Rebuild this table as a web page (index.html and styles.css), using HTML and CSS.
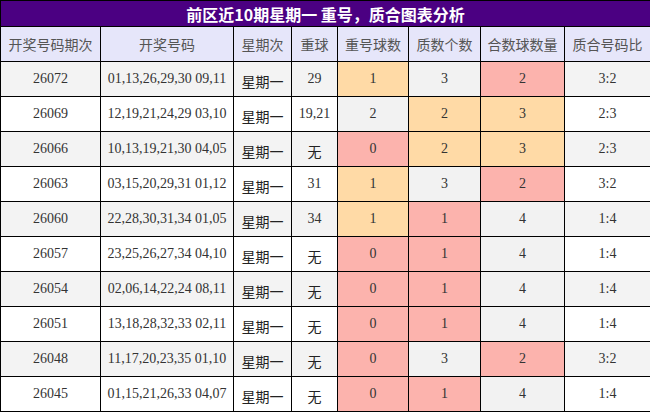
FILE: index.html
```html
<!DOCTYPE html>
<html lang="zh">
<head>
<meta charset="utf-8">
<title>前区近10期星期一 重号，质合图表分析</title>
<link rel="stylesheet" href="styles.css">
</head>
<body>
<table class="chart">
  <colgroup>
    <col class="c1"><col class="c2"><col class="c3"><col class="c4">
    <col class="c5"><col class="c6"><col class="c7"><col class="c8">
  </colgroup>
  <thead>
    <tr class="title-row"><th colspan="8">前区近10期星期一 重号，质合图表分析</th></tr>
    <tr class="head-row">
      <th>开奖号码期次</th><th>开奖号码</th><th>星期次</th><th>重球</th>
      <th>重号球数</th><th>质数个数</th><th>合数球数量</th><th>质合号码比</th>
    </tr>
  </thead>
  <tbody>
    <tr class="odd"><td>26072</td><td>01,13,26,29,30 09,11</td><td class="cn">星期一</td><td>29</td><td class="or">1</td><td class="gy">3</td><td class="pk">2</td><td>3:2</td></tr>
    <tr><td>26069</td><td>12,19,21,24,29 03,10</td><td class="cn">星期一</td><td>19,21</td><td class="gy">2</td><td class="or">2</td><td class="or">3</td><td>2:3</td></tr>
    <tr class="odd"><td>26066</td><td>10,13,19,21,30 04,05</td><td class="cn">星期一</td><td class="cn">无</td><td class="pk">0</td><td class="or">2</td><td class="or">3</td><td>2:3</td></tr>
    <tr><td>26063</td><td>03,15,20,29,31 01,12</td><td class="cn">星期一</td><td>31</td><td class="or">1</td><td class="gy">3</td><td class="pk">2</td><td>3:2</td></tr>
    <tr class="odd"><td>26060</td><td>22,28,30,31,34 01,05</td><td class="cn">星期一</td><td>34</td><td class="or">1</td><td class="pk">1</td><td class="gy">4</td><td>1:4</td></tr>
    <tr><td>26057</td><td>23,25,26,27,34 04,10</td><td class="cn">星期一</td><td class="cn">无</td><td class="pk">0</td><td class="pk">1</td><td class="gy">4</td><td>1:4</td></tr>
    <tr class="odd"><td>26054</td><td>02,06,14,22,24 08,11</td><td class="cn">星期一</td><td class="cn">无</td><td class="pk">0</td><td class="pk">1</td><td class="gy">4</td><td>1:4</td></tr>
    <tr><td>26051</td><td>13,18,28,32,33 02,11</td><td class="cn">星期一</td><td class="cn">无</td><td class="pk">0</td><td class="pk">1</td><td class="gy">4</td><td>1:4</td></tr>
    <tr class="odd"><td>26048</td><td>11,17,20,23,35 01,10</td><td class="cn">星期一</td><td class="cn">无</td><td class="pk">0</td><td class="gy">3</td><td class="pk">2</td><td>3:2</td></tr>
    <tr><td>26045</td><td>01,15,21,26,33 04,07</td><td class="cn">星期一</td><td class="cn">无</td><td class="pk">0</td><td class="pk">1</td><td class="gy">4</td><td>1:4</td></tr>
  </tbody>
</table>
</body>
</html>
```

FILE: styles.css
```css
html, body {
  margin: 0;
  padding: 0;
  background: #ffffff;
}

.chart {
  width: 650px;
  table-layout: fixed;
  border-collapse: collapse;
  font-family: "Liberation Serif", "Noto Sans CJK SC", serif;
  font-size: 14px;
  color: #333333;
}

.c1 { width: 100px; }
.c2 { width: 133px; }
.c3 { width: 58px; }
.c4 { width: 46px; }
.c5 { width: 71px; }
.c6 { width: 72px; }
.c7 { width: 84px; }
.c8 { width: 86px; }

.chart th,
.chart td {
  border: 1px solid #000000;
  text-align: center;
  vertical-align: middle;
  padding: 0;
  white-space: nowrap;
  overflow: hidden;
}

.title-row th {
  height: 25px;
  background: #4b0082;
  color: #ffffff;
  font-family: "Noto Sans CJK SC", "Liberation Serif", sans-serif;
  font-size: 16px;
  font-weight: bold;
  line-height: 22px;
}

.head-row th {
  height: 34px;
  background: #e6e6fa;
  color: #555555;
  font-family: "Noto Sans CJK SC", sans-serif;
  font-size: 14px;
  font-weight: normal;
  line-height: 20px;
}

.chart td {
  height: 34px;
  line-height: 20px;
}

.chart tr.odd td {
  background: #f3f3f3;
}

.chart td.cn {
  font-family: "Noto Sans CJK SC", sans-serif;
  color: #222222;
  height: 30px;
  padding-top: 4px;
}

.chart td.or,
.chart tr.odd td.or {
  background: #ffdaa6;
}

.chart td.pk,
.chart tr.odd td.pk {
  background: #fcb3ad;
}

.chart td.gy,
.chart tr.odd td.gy {
  background: #f2f2f2;
}
```
